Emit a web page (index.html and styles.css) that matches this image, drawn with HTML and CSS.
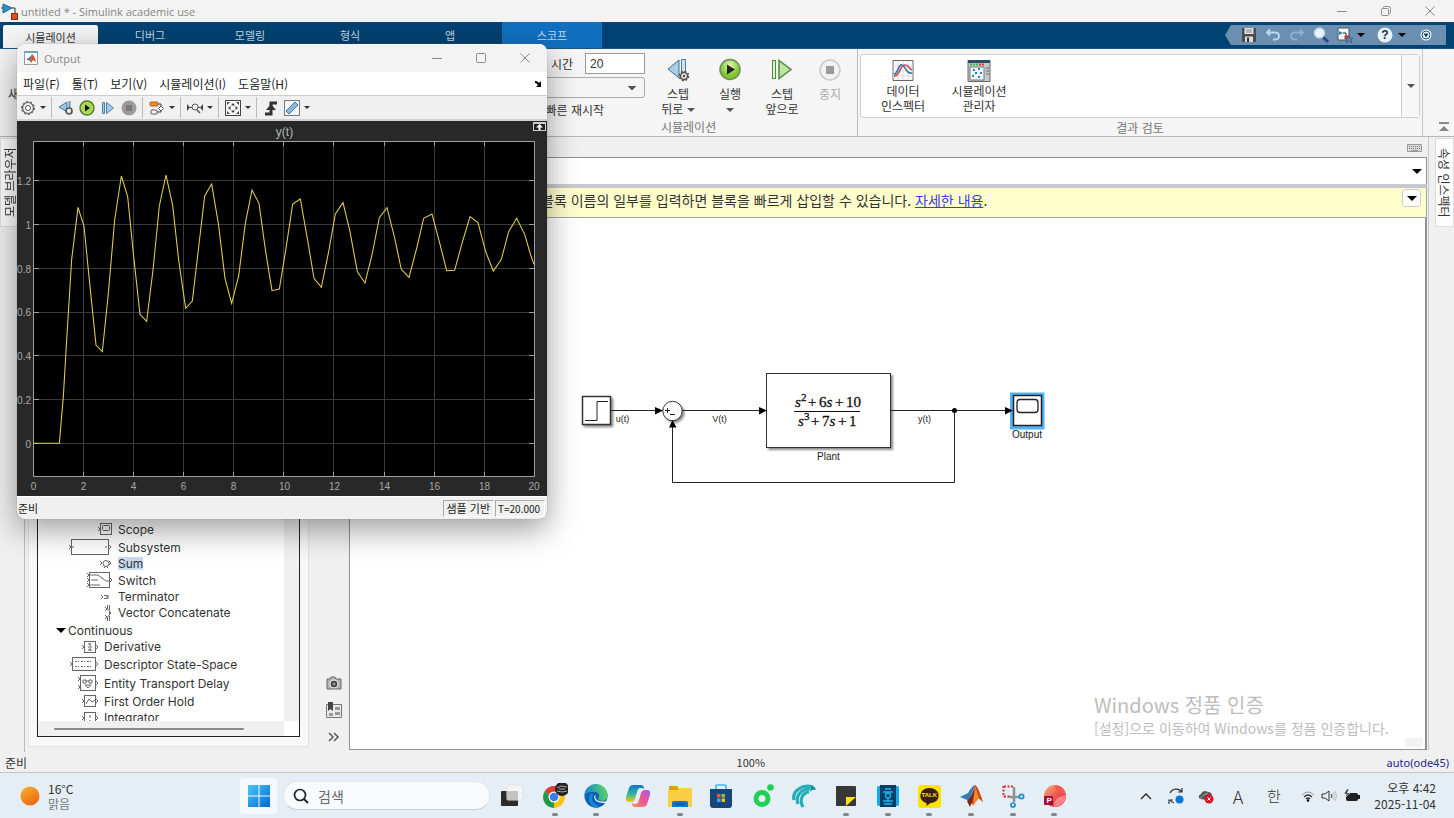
FILE: index.html
```html
<!DOCTYPE html>
<html lang="ko">
<head>
<meta charset="utf-8">
<title>untitled * - Simulink academic use</title>
<link rel="stylesheet" href="styles.css">
</head>
<body>
<div class="desktop">
<header class="titlebar">
  <svg class="app-logo" width="18" height="20" viewBox="0 0 18 20"><path d="M2 3l9 4-9 5z" fill="#2e8fc4" stroke="#1d6a99"/><path d="M0 7h2M11 7h3v5" stroke="#333" fill="none"/><rect x="10.500" y="12.500" width="6" height="6" fill="#e2501f" stroke="#8e2c0d"/></svg>
  <span class="title-text">untitled * - Simulink academic use</span>
  <div class="win-controls">
    <button aria-label="최소화"><svg width="10" height="10"><path d="M0 5.500h10"/></svg></button>
    <button aria-label="이전 크기로"><svg width="10" height="10"><rect x=".5" y="2.500" width="7" height="7" rx="1"/><path d="M2.500 2.500v-1q0-1 1-1h4q2 0 2 2v4q0 1-1 1h-1"/></svg></button>
    <button aria-label="닫기"><svg width="10" height="10"><path d="M.5.5l9 9M9.500.5l-9 9"/></svg></button>
  </div>
</header>

<nav class="tabs">
  <button class="tab active">시뮬레이션</button>
  <button class="tab">디버그</button>
  <button class="tab">모델링</button>
  <button class="tab">형식</button>
  <button class="tab">앱</button>
  <button class="tab scope-tab">스코프</button>
  <div class="quick">
    <svg class="quick-tip" width="6" height="20"><path d="M6 0L0 10l6 10z" fill="#6a8fb0"/></svg>
    <div class="quick-body">
      <button aria-label="저장"><svg width="16" height="16"><path d="M1 1h14v14H1z" fill="#4b4b4b"/><path d="M3.500 1h9v6h-9z" fill="#e4e4e4"/><path d="M5 3h6M5 5h6" stroke="#888"/><path d="M4 9.500h8V15H4z" fill="#ddd"/><path d="M6 10.500h2V15H6z" fill="#333"/></svg></button>
      <button aria-label="실행 취소"><svg width="16" height="16"><path d="M5 2.500L2 5.500l3 3M2 5.500h8q4 0 4 3.500t-4 3.500H8" fill="none" stroke="#b9dcf2" stroke-width="1.800"/></svg></button>
      <button aria-label="다시 실행"><svg width="16" height="16"><path d="M11 2.500l3 3-3 3M14 5.500H6q-4 0-4 3.500t4 3.500h2" fill="none" stroke="#8db2cd" stroke-width="1.800"/></svg></button>
      <button aria-label="찾기"><svg width="16" height="16"><path d="M10 10l5 5" stroke="#1c4f86" stroke-width="3"/><circle cx="6.500" cy="6" r="5" fill="#e6f3fb" stroke="#c6d6e2" stroke-width="1.500"/></svg></button>
      <button aria-label="즐겨찾기"><svg width="16" height="16"><path d="M1 1h11v12H1z" fill="#f6f6f6" stroke="#555"/><path d="M2 4l4 2-4 2z" fill="#297eb8"/><path d="M6 6h3v3" stroke="#333" fill="none"/><path d="M7.500 8.500h4v4h-4z" fill="#c2382a"/><path d="M12 8l1 3h3l-2 2 1 3-3-2-3 2 1-3-2-2h3z" fill="#5b82a8" stroke="#31587d" stroke-width=".7"/></svg></button>
      <i class="caret dark"></i>
      <button class="help" aria-label="도움말"><svg width="16" height="16"><circle cx="8" cy="8" r="7.500" fill="#e9f2f9"/></svg><b>?</b></button>
      <i class="caret dark"></i>
      <button class="last" aria-label="더 보기"><svg width="12" height="12"><circle cx="6" cy="6" r="5.500" fill="#fff"/><circle cx="6" cy="6" r="4" fill="#e9f2f9" stroke="#1c5681"/><path d="M3.500 4.500h5L6 8.500z" fill="#004272"/></svg></button>
    </div>
  </div>
</nav>

<section class="ribbon">
  <div class="group setup">
    <span class="new-label">새</span>
    <div class="fields">
      <div class="stop-row"><label for="stop">시간</label><input id="stop" type="text" value="20"></div>
      <select aria-label="시뮬레이션 모드"><option></option></select>
      <span class="fast">빠른 재시작</span>
    </div>
  </div>
  <div class="group sim">
    <div class="tools">
      <button class="tool"><svg width="24" height="24"><path d="M13 2v18L2 11z" fill="#a9cbe4" stroke="#41708f"/><rect x="15.500" y="1.500" width="4" height="16" fill="#cfe3f2" stroke="#4d82a8"/><circle cx="18" cy="18" r="4.500" fill="none" stroke="#555" stroke-width="1.600" stroke-dasharray="2 1.500"/><circle cx="18" cy="18" r="3.500" fill="#eee" stroke="#555" stroke-width="1.500"/><circle cx="18" cy="18" r="1.200" fill="#444"/></svg><span>스텝<br>뒤로 <i class="caret"></i></span></button>
      <button class="tool"><svg width="24" height="24"><defs><radialGradient id="green" cx=".5" cy=".3"><stop offset="0" stop-color="#e8f8b8"/><stop offset="1" stop-color="#7cc52c"/></radialGradient></defs><circle cx="12" cy="11.500" r="10" fill="url(#green)" stroke="#6f8d58" stroke-width="1.500"/><path d="M9 6.500l8 5-8 5z" fill="#222"/></svg><span>실행<br><i class="caret"></i></span></button>
      <button class="tool"><svg width="24" height="24"><rect x="2.500" y="2.500" width="3" height="18" fill="#dff2cf" stroke="#4f8b3e"/><path d="M9 2.500v18l12-9z" fill="#bfe59f" stroke="#4f8b3e" stroke-width="1.500"/></svg><span>스텝<br>앞으로</span></button>
      <button class="tool off" disabled><svg width="24" height="24"><circle cx="12" cy="12" r="10" fill="#f1f1f1" stroke="#c9c9c9" stroke-width="1.500"/><path d="M8 8h8v8H8z" fill="#999"/></svg><span>중지</span></button>
    </div>
    <div class="caption left">시뮬레이션</div>
  </div>
  <div class="group review">
    <div class="gallery">
      <button class="tool"><svg width="24" height="24"><path d="M2 1.500h20v20H2z" fill="#fafafa" stroke="#666"/><path d="M7 2v19M12 2v19M17 2v19M2 7h20M2 12h20M2 17h20" stroke="#ddd"/><path d="M3 15c4 0 4-10 8-9s4 10 10 8" stroke="#2b7cb8" stroke-width="1.700" fill="none"/><path d="M3 17c7 0 5-11 11-11 4 0 4 4 7 5" stroke="#d34b4b" stroke-width="1.700" fill="none"/></svg><span>데이터<br>인스펙터</span></button>
      <button class="tool"><svg width="24" height="24"><path d="M1 1.500h22v21H1z" fill="#c6c9cc" stroke="#666"/><path d="M1 1h22v3H1z" fill="#2d4d66"/><path d="M3 5.500h8" stroke="#24c43b" stroke-width="2" stroke-dasharray="2 1"/><path d="M12 5.500h6" stroke="#e33" stroke-width="2" stroke-dasharray="2 1"/><path d="M3 8h14v13H3z" fill="#f4f9fc" stroke="#777"/><path d="M6 11h2M11 10h2M8 14h2M13 14h2M5 17h2M11 18h2" stroke="#2183c4" stroke-width="2"/><path d="M19 9h3M19 12h3M19 15h3" stroke="#666"/></svg><span>시뮬레이션<br>관리자</span></button>
      <button class="more" aria-label="갤러리 열기"><i class="caret"></i></button>
    </div>
    <div class="caption">결과 검토</div>
  </div>
  <button class="collapse" aria-label="툴스트립 최소화"><svg width="10" height="9"><path d="M0 1h10" stroke="#888" stroke-width="2"/><path d="M0 9l5-5 5 5z" fill="#888"/></svg></button>
</section>

<main class="work">
  <aside class="rail left-rail"><button class="side-tab up">모델 브라우저</button></aside>
  <aside class="library">
    <div class="tree-box">
      <ul class="tree">
        <li class="h18"><span class="ic"><svg width="14" height="14"><rect x="2.500" y="1.500" width="11" height="11"/><rect x="4.500" y="3.500" width="7" height="5" rx="1"/><path d="M0 5l2 2-2 2"/></svg></span>Scope</li>
        <li class="h18"><span class="ic"><svg width="44" height="18"><rect x="3.500" y="1.500" width="37" height="15"/><path d="M1 7l2 2-2 2M41 7l2 2-2 2M5 8v2M38 8v2"/></svg></span>Subsystem</li>
        <li class="h14"><span class="ic"><svg width="12" height="10"><circle cx="6" cy="4.500" r="3"/><path d="M0 2l2 2-2 2M9 2l2 2-2 2M4 9l2-2 2 2"/></svg></span><mark>Sum</mark></li>
        <li class="h18"><span class="ic"><svg width="26" height="18"><rect x="3.500" y="1.500" width="20" height="15"/><path d="M1 2l2 2-2 2M1 7l2 2-2 2M1 12l2 2-2 2M24 7l2 2-2 2M4 4h8l8 6h3M4 14h10M5 9h7"/></svg></span>Switch</li>
        <li class="h14 shift"><span class="ic"><svg width="10" height="8"><path d="M1 2l2 2-2 2M4 2.500h3v3H4M8 2v4"/></svg></span>Terminator</li>
        <li class="h17"><span class="ic"><svg width="8" height="16"><path d="M1 2l2 2-2 2M1 10l2 2-2 2M3.500 0v4l2 2v4l-2 2v4M5.500 0v5M5.500 11v5M5 6l2 2-2 2"/></svg></span>Vector Concatenate</li>
        <li class="h18 branch"><i class="caret dark"></i>Continuous</li>
        <li class="h14 leaf"><span class="ic"><svg width="16" height="14"><rect x="2.500" y="1.500" width="11" height="11"/><path d="M0 5l2 2-2 2M14 5l2 2-2 2M6 4h3M8 3v3M6 7h4M6 10h4M8 8v3"/></svg></span>Derivative</li>
        <li class="h20 leaf"><span class="ic"><svg width="28" height="16"><rect x="2.500" y="1.500" width="23" height="13"/><path d="M0 6l2 2-2 2M26 6l2 2-2 2"/><path d="M5 5.500h18M5 10.500h18" stroke-dasharray="2 1 1 2"/></svg></span>Descriptor State-Space</li>
        <li class="h18 leaf"><span class="ic"><svg width="20" height="18"><rect x="2.500" y="1.500" width="15" height="15"/><path d="M0 3l2 2-2 2M0 11l2 2-2 2M18 7l2 2-2 2M5 6h3v3H5zM11 6h3v3h-3zM8 7h3M7 11l3 3 3-3z"/></svg></span>Entity Transport Delay</li>
        <li class="h18 leaf"><span class="ic"><svg width="16" height="14"><rect x="2.500" y="1.500" width="11" height="11"/><path d="M0 5l2 2-2 2M14 5l2 2-2 2M4 10l3-5 3 3 3-2"/></svg></span>First Order Hold</li>
        <li class="h14 leaf"><span class="ic"><svg width="16" height="14"><rect x="2.500" y="1.500" width="11" height="14"/><path d="M0 5l2 2-2 2M14 5l2 2-2 2M8 4v3M8 9v3"/></svg></span>Integrator</li>
      </ul>
      <div class="vbar"></div>
      <div class="hbar"><div class="thumb"></div></div>
    </div>
  </aside>
  <div class="palette">
    <button aria-label="스크린샷"><svg width="16" height="14"><path d="M1 3h3l1-2h4l1 2h5v10H1z" fill="#b5b5b5" stroke="#666"/><circle cx="8" cy="8" r="4" fill="#444" stroke="#eee"/><circle cx="8" cy="8" r="1.500" fill="#999"/></svg></button>
    <button aria-label="모델 브라우저 표시"><svg width="16" height="16"><path d="M.5 2.500h15v13H.5z" fill="#e9e9e9" stroke="#777"/><path d="M2 0h5v9L4.500 7 2 9z" fill="#444"/><path d="M9 5h5v3H9zM9 10h5v3H9zM3 11h4v3H3z" fill="#999"/></svg></button>
    <button aria-label="더 보기"><svg width="12" height="10"><path d="M1 1l4 4-4 4M6 1l4 4-4 4" fill="none" stroke="#555" stroke-width="1.500"/></svg></button>
  </div>
  <section class="editor">
    <div class="doc-tabs"><svg width="15" height="9"><path d="M.5.5h14v7H.5z" fill="#ddd" stroke="#999"/><path d="M2 2.500h11M2 4.500h11" stroke="#777" stroke-dasharray="1 1"/><path d="M4 6.500h7" stroke="#999"/></svg></div>
    <div class="address"><i class="caret dark"></i></div>
    <div class="hint"><p>블록 이름의 일부를 입력하면 블록을 빠르게 삽입할 수 있습니다. <a href="#more">자세한 내용</a>.</p><button aria-label="알림 옵션"><i class="caret dark"></i></button></div>
    <div class="canvas">
      <svg class="model" width="100%" height="100%">
        <defs><filter id="sh" x="-20%" y="-20%" width="150%" height="150%"><feDropShadow dx="2" dy="2" stdDeviation="1" flood-opacity=".45"/></filter></defs>
        <g transform="translate(-350 -218)">
          <g fill="#fff" stroke="#333">
            <rect x="582.500" y="396.500" width="28" height="28" filter="url(#sh)" stroke-width="1.500"/>
            <circle cx="672.500" cy="411" r="9.700" filter="url(#sh)"/>
            <rect x="766.500" y="373.500" width="124" height="74" filter="url(#sh)"/>
          </g>
          <path d="M585 420.500h12v-19h11" fill="none" stroke="#222"/>
          <path d="M611 410.500h45M682 410.500h78M891 410.500h115M954.500 410v72.500H672.500V427" fill="none" stroke="#222"/>
          <path d="M655 407l8 3.500-8 4zM759 407l8 3.500-8 4zM669 427.500l3.500-7.500 4 7.500z"/>
          <circle cx="954.500" cy="410.500" r="2.500"/>
          <path d="M665 410.500h5M667.500 408v5M670 414.500h5" stroke="#222"/>
          <rect x="1010" y="392.500" width="34.500" height="37" fill="#4fb3f6"/>
          <rect x="1013.500" y="395.500" width="28" height="30" fill="#fff" stroke="#222" stroke-width="1.500"/>
          <rect x="1017" y="399.500" width="21" height="13" rx="3" fill="#fff" stroke="#222" stroke-width="1.300"/>
          <path d="M1005 407l8 3.500-8 4z"/>
          <g class="sig" text-anchor="middle">
            <text x="622.500" y="422">u(t)</text><text x="719.500" y="422">V(t)</text><text x="924.500" y="422">y(t)</text>
            <text class="name" x="828.500" y="460">Plant</text><text class="name" x="1027" y="438">Output</text>
          </g>
          <g class="math">
            <text x="795" y="407"><tspan class="it">s</tspan></text><text class="sup" x="801" y="401">2</text><text x="808" y="407">+</text><text x="819" y="407">6<tspan class="it">s</tspan></text><text x="835" y="407">+</text><text x="846" y="407">10</text>
            <path d="M794 411.500h66" stroke="#111"/>
            <text x="798" y="426"><tspan class="it">s</tspan></text><text class="sup" x="804" y="420">3</text><text x="811" y="426">+</text><text x="822" y="426">7<tspan class="it">s</tspan></text><text x="838" y="426">+</text><text x="849" y="426">1</text>
          </g>
        </g>
      </svg>
      <div class="watermark"><strong>Windows 정품 인증</strong><span>[설정]으로 이동하여 Windows를 정품 인증합니다.</span></div>
      <div class="grip"></div>
    </div>
  </section>
  <aside class="rail right-rail"><button class="side-tab">속성 인스펙터</button></aside>
</main>

<footer class="status"><span>준비</span><span class="zoom">100%</span><a href="#solver">auto(ode45)</a></footer>

<footer class="taskbar">
  <div class="weather"><svg width="20" height="20"><defs><linearGradient id="sun" x1="0" y1="0" x2=".6" y2="1"><stop offset="0" stop-color="#f5b52c"/><stop offset="1" stop-color="#ee6a12"/></linearGradient></defs><circle cx="10" cy="10" r="9.500" fill="url(#sun)"/></svg><div>16°C<br><span>맑음</span></div></div>
  <button class="start" aria-label="시작"><svg width="22" height="22"><defs><linearGradient id="win" x1="0" y1="0" x2="1" y2="1"><stop offset="0" stop-color="#4cc8f6"/><stop offset="1" stop-color="#0068cf"/></linearGradient></defs><path d="M0 0h10.500v10.500H0zM11.500 0H22v10.500H11.500zM0 11.500h10.500V22H0zM11.500 11.500H22V22H11.500z" fill="url(#win)"/></svg></button>
  <label class="search"><svg width="16" height="16"><circle cx="7" cy="7" r="5.500" fill="none" stroke="#222" stroke-width="1.700"/><path d="M11 11l4 4" stroke="#222" stroke-width="2"/></svg><input type="text" placeholder="검색" aria-label="검색"></label>
  <button class="taskview" aria-label="작업 보기"><svg width="24" height="24"><rect x="1" y="7" width="17" height="15" rx="1" fill="#2b2b2b"/><rect x="7" y="1" width="16" height="15" rx="1" fill="#f4f4f4" stroke="#e2e2e2"/><path d="M7 7h11v9H7z" fill="#c4c4c4"/></svg></button>
  <div class="apps">
    <button class="run" aria-label="Chrome"><svg viewBox="0 0 26 26"><path d="M12 14L2.500 8.500A11 11 0 0 1 21.500 8.500z" fill="#e33b2e"/><path d="M12 14L21.500 8.500A11 11 0 0 1 12 25z" fill="#fbc116"/><path d="M12 14L12 25A11 11 0 0 1 2.500 8.500z" fill="#229a4a"/><circle cx="12" cy="14" r="5.500" fill="#fff"/><circle cx="12" cy="14" r="4.300" fill="#3a7de8"/><circle cx="20" cy="6" r="7" fill="#222"/><path d="M15 5l4-2 6 1M15 8l5 1 5-1M17 6h6" stroke="#aaa" fill="none"/></svg></button>
    <button class="run" aria-label="Edge"><svg viewBox="0 0 26 26"><defs><linearGradient id="edge" x1="0" y1=".5" x2="1" y2=".3"><stop offset="0" stop-color="#1685d2"/><stop offset="1" stop-color="#5bd65c"/></linearGradient></defs><circle cx="13" cy="13" r="11.500" fill="#0e5eb4"/><path d="M1.500 13a11.500 11.500 0 0 1 23-1q0 6-6 6-4 0-3-3 2-6-4-6-6-1-10 4z" fill="url(#edge)"/><path d="M13 11c-3 6 4 9 11 7l1-1-1 3c-3 0-12 1-13-6z" fill="#e9f1f8"/><path d="M9 11q-5 9 6 13" fill="none" stroke="#1788d8" stroke-width="3"/></svg></button>
    <button aria-label="Copilot"><svg viewBox="0 0 26 26"><defs><linearGradient id="c1" x1="0" y1="0" x2="0" y2="1"><stop offset="0" stop-color="#1673d2"/><stop offset=".5" stop-color="#2ab3a0"/><stop offset="1" stop-color="#f3c613"/></linearGradient><linearGradient id="c2" x1="1" y1="0" x2="0" y2="1"><stop offset="0" stop-color="#a35bf0"/><stop offset=".5" stop-color="#f0568e"/><stop offset="1" stop-color="#ff9a52"/></linearGradient></defs><path d="M8 2h8q3 0 3 4l-2-1h-2q-2 0-3 4l-2 7q-1 3-4 3H4q-4 0-3-5l3-9q1-3 4-3z" fill="url(#c1)"/><path d="M18 24h-8q-3 0-3-4l2 1h1q3 0 4-4l2-7q1-3 4-3h2q4 0 3 5l-3 9q-1 3-4 3z" fill="url(#c2)"/></svg></button>
    <button class="run" aria-label="파일 탐색기"><svg viewBox="0 0 26 26"><path d="M2 3h8l2 3h12v8H2z" fill="#dc9d17"/><path d="M2 7h9l2-2h11q1 0 1 1v18H1V8q0-1 1-1z" fill="#fbce48"/><path d="M5 24v-4q0-2 2-2h12q2 0 2 2v4z" fill="#1574c8"/><path d="M9 21h8" stroke="#074d92"/></svg></button>
    <button aria-label="Store"><svg viewBox="0 0 26 26"><path d="M8 7V3q0-1 1-1h8q1 0 1 1v4" fill="none" stroke="#3dbdf0" stroke-width="1.700"/><path d="M2 6h22v16q0 3-3 3H5q-3 0-3-3z" fill="#16477c"/><path d="M9 11h3.500v3.500H9z" fill="#f05a2b"/><path d="M13.500 11H17v3.500h-3.500z" fill="#8cc63e"/><path d="M9 15.500h3.500V19H9z" fill="#2ea6ea"/><path d="M13.500 15.500H17V19h-3.500z" fill="#fbbd17"/></svg></button>
    <button aria-label="음악"><svg viewBox="0 0 26 26"><circle cx="12" cy="15.500" r="6" fill="none" stroke="#1fd055" stroke-width="5"/><circle cx="20.500" cy="4.500" r="3.300" fill="#1fd055"/></svg></button>
    <button aria-label="웨일"><svg viewBox="0 0 26 26"><g fill="none" stroke="#20afb8" stroke-width="3.200"><path d="M3 17C1 8 11 1 22 4"/><path d="M7 21C4 13 10 6 19 6"/><path d="M12 24c-4-7-1-14 6-15"/></g><path d="M20 3q4 0 5 4-4-1-6 2" fill="#168d9e"/></svg></button>
    <button class="run" aria-label="스티커 메모"><svg viewBox="0 0 26 26"><rect x="3" y="3" width="20" height="20" rx="1" fill="#373737"/><path d="M13 23V14h10z" fill="#ffe01b"/></svg></button>
    <button class="run" aria-label="한글"><svg viewBox="0 0 26 26"><rect x="2" y="3" width="22" height="20" rx="2" fill="#10a9ee"/><rect x="5" y="2" width="16" height="22" fill="#053f65"/><path d="M10 6h6M8 9h10M13 15v3M8 18h10M9 21h8" stroke="#22b8f2" stroke-width="1.300"/><circle cx="13" cy="12.500" r="2.500" fill="none" stroke="#22b8f2" stroke-width="1.300"/></svg></button>
    <button class="run talk" aria-label="카카오톡"><svg viewBox="0 0 26 26"><rect x="2" y="2" width="23" height="23" rx="3" fill="#fbe300"/><path d="M13.500 5c12 0 12 15 1 15l-4 3v-3c-9-2-8-15 3-15z" fill="#3b1c1a"/></svg><b>TALK</b></button>
    <button class="run" aria-label="MATLAB"><svg viewBox="0 0 26 26"><path d="M2 14l8-4q5-8 7-8l-6 16-4-2z" fill="#347bb3"/><path d="M17 2q3 1 8 17l-5-4-5 7-4-4q4-5 6-16z" fill="#cb4b1c"/><path d="M17 2q-1 14-5 22l-3-6q5-4 8-16z" fill="#7e241c"/><path d="M17 3l4 12-6 8z" fill="#f38a29"/></svg></button>
    <button class="run" aria-label="캡처 도구"><svg viewBox="0 0 26 26"><path d="M4 3.500h10M4 13.500h7M3.500 3v11" fill="none" stroke="#d12e2b" stroke-width="2" stroke-dasharray="2 1.500"/><path d="M14 4v15M9 14h11" stroke="#8a9299" stroke-width="2.500"/><circle cx="21.500" cy="13.500" r="2.200" fill="none" stroke="#208dd6" stroke-width="1.700"/><circle cx="13" cy="22" r="2" fill="none" stroke="#208dd6" stroke-width="1.700"/></svg></button>
    <button class="run ppt" aria-label="PowerPoint"><svg viewBox="0 0 26 26"><defs><linearGradient id="pp" x1="0" y1="0" x2="1" y2="1"><stop offset="0" stop-color="#ffad7a"/><stop offset=".6" stop-color="#e84a4a"/><stop offset="1" stop-color="#c41e4b"/></linearGradient></defs><circle cx="14" cy="13" r="11" fill="url(#pp)"/><path d="M14 2q1 8 11 10-3-10-11-10z" fill="#f4594c"/><path d="M13 24q-1-10 12-12-1 11-12 12z" fill="#ff8585"/><rect x="3" y="13" width="9" height="9" rx="1" fill="#a90d32"/></svg><b>P</b></button>
  </div>
  <div class="tray">
    <button class="t1" aria-label="숨겨진 아이콘"><svg width="12" height="8"><path d="M1 7l5-5 5 5" fill="none" stroke="#222" stroke-width="1.300"/></svg></button>
    <button class="t1" aria-label="동기화"><svg width="18" height="18"><path d="M3 6a7 7 0 0 1 12-1M15 1v4h-4M2 17v-4h4M3 13a7 7 0 0 0 4 3" fill="none" stroke="#333" stroke-width="1.200"/><circle cx="12.500" cy="12.500" r="4" fill="#0a76d8"/></svg></button>
    <button class="t1" aria-label="OneDrive"><svg width="18" height="16"><path d="M3 11q-3-3 1-5 2-5 7-2 4 0 4 4l-4 4z" fill="#555"/><path d="M3 11q3-5 8-6" stroke="#aaa" fill="none"/><circle cx="12" cy="11" r="4.500" fill="#d3182b"/><path d="M10.500 9.500l3 3M13.500 9.500l-3 3" stroke="#fff"/></svg></button>
    <button class="lang">A</button>
    <button class="lang han">한</button>
    <button class="net" aria-label="네트워크 및 전원"><svg width="14" height="12"><g fill="none" stroke="#333"><path d="M1 5q6-6 12 0" stroke="#999"/><path d="M3 7q4-4 8 0M5 9q2-2 4 0" stroke-width="1.200"/></g><circle cx="7" cy="10.500" r="1.200"/></svg><svg width="16" height="14"><path d="M1 5h3l4-3v10L4 9H1z" fill="none" stroke="#333"/><path d="M10 5q2 2 0 4" fill="none" stroke="#333"/><path d="M12 3q3 4 0 8M14 2q3 5 0 10" fill="none" stroke="#bbb"/></svg><svg width="18" height="14"><rect x="3.500" y="4.500" width="11" height="7" rx="1" fill="#222" stroke="#222"/><path d="M16 6v4" stroke="#222" stroke-width="2"/><path d="M4 0L1 5h3L2 9l5-5H4l2-4z" fill="#222" stroke="#e6eef5" stroke-width=".6"/></svg></button>
    <div class="clock">오후 4:42<br>2025-11-04</div>
  </div>
</footer>

<section class="scope">
  <header class="scope-title">
    <svg width="14" height="14"><path d="M.5.5h13v13H.5z" fill="#fff" stroke="#999"/><path d="M0 0h14v2H0z" fill="#6fa2c7"/><path d="M2 8l3-1 3-4-2 7z" fill="#2c77ad"/><path d="M8 3q2 1 4 8l-3-2-2 3-1-2z" fill="#d4501c"/></svg>
    <span>Output</span>
    <div class="win-controls">
      <button aria-label="최소화"><svg width="10" height="10"><path d="M0 5.500h10"/></svg></button>
      <button aria-label="최대화"><svg width="10" height="10"><rect x=".5" y=".5" width="9" height="9" rx="1"/></svg></button>
      <button aria-label="닫기"><svg width="10" height="10"><path d="M.5.5l9 9M9.500.5l-9 9"/></svg></button>
    </div>
  </header>
  <nav class="menu"><button>파일(F)</button><button>툴(T)</button><button>보기(V)</button><button>시뮬레이션(I)</button><button>도움말(H)</button><svg width="8" height="8"><path d="M0 1q3 0 4 2l2-2v6H1l2-2Q2 3 0 3z"/></svg></nav>
  <div class="bar">
    <button aria-label="설정"><svg width="16" height="16"><circle cx="8" cy="8" r="5.500" fill="#eee" stroke="#555" stroke-width="1.200"/><circle cx="8" cy="8" r="6.500" fill="none" stroke="#555" stroke-dasharray="2 2"/><circle cx="8" cy="8" r="2.500" fill="#fff" stroke="#555"/></svg></button><i class="caret small"></i><hr>
    <button aria-label="스텝 뒤로"><svg width="16" height="16"><path d="M9 2v10L1 7z" fill="#9fc4df" stroke="#4c7a9b"/><path d="M11.500 1v7" stroke="#6799bd" stroke-width="2"/><circle cx="11" cy="11" r="3" fill="#eee" stroke="#555" stroke-width="1.700"/></svg></button>
    <button aria-label="실행"><svg width="16" height="16"><circle cx="8" cy="8" r="7" fill="#a9d957" stroke="#567a2c" stroke-width="1.400"/><path d="M6 4.500l5 3.500-5 3.500z" fill="#111"/></svg></button>
    <button aria-label="스텝 앞으로"><svg width="16" height="16"><path d="M2.500 2.500h2v11h-2zM6.500 2.500v11l7-5.500z" fill="#a5cbe8" stroke="#4d82a8"/></svg></button>
    <button aria-label="중지"><svg width="16" height="16"><circle cx="8" cy="8" r="7.500" fill="#9b9b9b"/><path d="M5 5h6v6H5z" fill="#777"/></svg></button><hr>
    <button aria-label="블록 강조"><svg width="16" height="16"><rect x="1" y="2" width="8" height="4" rx="1" fill="#f08b2c" stroke="#b45e12"/><path d="M9 4h3v4" fill="none" stroke="#444"/><path d="M12 6l2.500 2.500L12 11 9.500 8.500z" fill="#fff" stroke="#555"/><rect x="2" y="10" width="6" height="4" rx="1" fill="#fff" stroke="#555"/><path d="M8 12h4v-1" fill="none" stroke="#444"/></svg></button><i class="caret small"></i><hr>
    <button aria-label="확대"><svg width="16" height="16"><path d="M0 4v7l3-3.500zM16 4v7l-3-3.500z" fill="#444"/><path d="M3 7.500h2M11 7.500h2" stroke="#444"/><circle cx="8" cy="7" r="3" fill="#fff" stroke="#555"/><path d="M10 10l3 3" stroke="#555" stroke-width="1.500"/></svg></button><i class="caret small"></i><hr>
    <button aria-label="축 맞춤"><svg width="16" height="16"><rect x=".5" y=".5" width="15" height="15" fill="#f5f5f5" stroke="#444"/><path d="M2 2h3L2 5zM14 2h-3l3 3zM2 14h3l-3-3zM14 14h-3l3-3zM8 3l2 2.500H6zM8 13l2-2.500H6zM3 8l2.500-2v4zM13 8l-2.500-2v4z" fill="#444"/></svg></button><i class="caret small"></i><hr>
    <button aria-label="트리거"><svg width="14" height="16"><path d="M1 14h6V3h6" fill="none" stroke="#333" stroke-width="3"/><path d="M2 10l5-6 5 6z" fill="#333"/></svg></button>
    <button aria-label="측정"><svg width="16" height="16"><rect x=".5" y=".5" width="15" height="15" fill="#fafafa" stroke="#777"/><path d="M2 11l9-9 3 3-9 9z" fill="#8cb9dc" stroke="#447296"/></svg></button><i class="caret small"></i>
  </div>
  <div class="plot">
    <svg viewBox="17 121 530 375" width="100%">
      <rect x="33.500" y="141.500" width="501" height="335" fill="#000"/>
      <path d="M83.500 142v334M133.500 142v334M183.500 142v334M233.500 142v334M283.500 142v334M333.500 142v334M384.500 142v334M434.500 142v334M484.500 142v334M34 180.500h500M34 224.500h500M34 268.500h500M34 312.500h500M34 355.500h500M34 399.500h500M34 443.500h500" stroke="#3a3a3a" fill="none"/>
      <path d="M83.500 142v4M133.500 142v4M183.500 142v4M233.500 142v4M283.500 142v4M333.500 142v4M384.500 142v4M434.500 142v4M484.500 142v4M83.500 472v4M133.500 472v4M183.500 472v4M233.500 472v4M283.500 472v4M333.500 472v4M384.500 472v4M434.500 472v4M484.500 472v4M34 180.500h5M34 224.500h5M34 268.500h5M34 312.500h5M34 355.500h5M34 399.500h5M34 443.500h5M529 180.500h5M529 224.500h5M529 268.500h5M529 312.500h5M529 355.500h5M529 399.500h5M529 443.500h5" stroke="#a0a0a0" fill="none"/>
      <rect x="33.500" y="141.500" width="501" height="335" fill="none" stroke="#a0a0a0"/>
      <g transform="translate(0 120) scale(.33333)"><polyline fill="none" stroke="#e0cd50" stroke-width="3.200" points="101,970 178,970 190,830 200,660 215,418 234,262 252,318 267,470 288,675 307,695 325,520 344,300 364,168 383,230 401,410 420,583 440,604 459,450 478,258 498,165 518,256 536,420 557,565 577,543 595,390 614,228 635,192 655,310 675,475 695,550 716,468 736,310 756,210 777,250 797,395 816,512 838,507 858,385 878,252 901,237 921,350 942,475 964,502 986,395 1006,282 1029,248 1050,335 1072,455 1095,489 1116,405 1138,293 1161,263 1183,350 1204,448 1227,472 1250,385 1271,295 1296,282 1318,365 1340,452 1364,451 1386,370 1410,290 1434,308 1457,395 1480,453 1504,418 1526,335 1550,295 1574,343 1592,405 1602,433"/></g>
      <g class="tick" text-anchor="end"><text x="31" y="185">1.2</text><text x="31" y="229">1</text><text x="31" y="273">0.8</text><text x="31" y="316">0.6</text><text x="31" y="360">0.4</text><text x="31" y="404">0.2</text><text x="31" y="448">0</text></g>
      <g class="tick" text-anchor="middle"><text x="33.500" y="490">0</text><text x="83.500" y="490">2</text><text x="133.500" y="490">4</text><text x="183.500" y="490">6</text><text x="233.500" y="490">8</text><text x="284.500" y="490">10</text><text x="334.500" y="490">12</text><text x="384.500" y="490">14</text><text x="434.500" y="490">16</text><text x="484.500" y="490">18</text><text x="534" y="490">20</text></g>
      <text class="plot-title" x="284.500" y="136" text-anchor="middle">y(t)</text>
      <rect x="533.500" y="122.500" width="12" height="8" fill="#222" stroke="#ccc"/><path d="M533 123h13" stroke="#ccc" stroke-width="2"/><path d="M539.500 124l3.500 3.500h-7zM538.500 127h2v3h-2z" fill="#fff"/>
    </svg>
  </div>
  <footer class="scope-status"><span>준비</span><output>샘플 기반</output><output>T=20.000</output></footer>
</section>
</div>
</body>
</html>
```
FILE: styles.css
```css
* { box-sizing: border-box; }
body { margin: 0; font-family: "Noto Sans CJK KR", "Liberation Sans", sans-serif; font-size: 12px; color: #333; }
button { border: 0; background: none; padding: 0; margin: 0; font: inherit; color: inherit; display: flex; align-items: center; justify-content: center; }
svg { display: block; flex: none; }
.caret { display: inline-block; width: 0; height: 0; border: 4px solid transparent; border-top: 4px solid #555; border-bottom: 0; flex: none; }
.caret.dark { border-width: 5px 5px 0; border-top-color: #000; }
.caret.small { border-width: 3px 3px 0; margin: 0 2px; border-top-color: #333; }

.desktop { position: relative; display: flex; flex-direction: column; height: 100vh; min-height: 680px; overflow: hidden; background: #f0f0f0; }
.titlebar { flex: none; height: 22px; display: flex; align-items: center; gap: 2px; background: #f3f3f3; color: #858585; }
.title-text, .scope-title span { font-family: "Open Sans", sans-serif; font-size: 11px; }
.app-logo { margin-left: 1px; }
.win-controls { margin-left: auto; display: flex; }
.win-controls button { width: 44px; height: 22px; }
.win-controls svg { fill: none; stroke: #8a8a8a; }
.titlebar .win-controls { padding-right: 2px; }

.tabs { flex: none; height: 27px; display: flex; background: #004272; border-bottom: 1px solid #1c5681; }
.tab { width: 100px; color: #c5d7e5; font-size: 11px; }
.tab.active { width: 95px; margin: 3px 2px 0 3px; background: #f5f5f5; color: #333; border-radius: 2px 2px 0 0; }
.tab.scope-tab { background: #1070c0; margin-left: 2px; }
.quick { margin: 3px 8px 3px auto; display: flex; }
.quick-body { display: flex; align-items: center; background: #6a8fb0; padding: 0 6px; width: 215px; }
.quick-body button { width: 24px; height: 20px; }
.quick-body .help { position: relative; width: 26px; margin-left: 7px; }
.quick-body .help b { position: absolute; font: bold 12px "Liberation Sans", sans-serif; color: #222b40; }
.quick-body .caret { border-width: 4px 4px 0; }
.quick-body .last { margin-left: 8px; }

.ribbon { flex: none; height: 88px; display: flex; background: #f5f5f5; border-bottom: 1px solid #b5b5b5; }
.setup { width: 645px; display: flex; justify-content: space-between; padding: 4px 0 0 8px; }
.new-label { padding-top: 32px; }
.fields { display: flex; flex-direction: column; align-items: flex-end; gap: 3px; }
.stop-row { display: flex; align-items: center; gap: 12px; }
.stop-row input { width: 60px; height: 21px; border: 1px solid #999; padding: 0 4px; font: 12px "Liberation Sans", sans-serif; color: #333; background: #fff; }
.fields select { appearance: none; width: 140px; height: 21px; border: 1px solid #aaa; border-radius: 3px; background: linear-gradient(45deg, transparent 50%, #555 50%) no-repeat right 12px center / 4px 4px, linear-gradient(-45deg, transparent 50%, #555 50%) no-repeat right 8px center / 4px 4px, #f5f5f5; }
.fast { margin-right: 41px; line-height: 18px; }
.sim { width: 213px; border-right: 1px solid #bbb; padding: 9px 0 0 7px; display: flex; flex-direction: column; }
.tools { display: flex; height: 60px; }
.tool { width: 52px; flex-direction: column; justify-content: flex-start; line-height: 15px; gap: 4px; }
.tool .caret { margin: 0 0 2px 4px; }
.tool br + .caret { margin-left: 0; }
.tool.off { width: 44px; color: #aaa; }
.caption { color: #777; text-align: center; line-height: 18px; }
.caption.left { text-align: left; padding-left: 9px; }
.review { flex: 1; padding: 5px 2px 0 2px; border-right: 1px solid #c5c5c5; }
.gallery { height: 64px; display: flex; background: #fff; border: 1px solid #cfcfcf; border-radius: 3px; padding: 4px 0 0 4px; margin-bottom: 1px; }
.gallery .tool { width: 76px; gap: 0; }
.more { margin: -4px 0 0 auto; width: 18px; border-left: 1px solid #ccc; background: #f7f7f7; }
.collapse { width: 31px; align-self: flex-end; height: 19px; padding-left: 11px; }

.work { flex: 1; min-height: 0; display: flex; }
.rail { display: flex; align-items: flex-start; }
.left-rail { width: 25px; border-right: 1px solid #bbb; padding: 1px 0; }
.right-rail { width: 25px; padding: 1px 0 0 6px; }
.side-tab { writing-mode: vertical-rl; text-orientation: sideways; width: 19px; height: 89px; background: #fdfdfd; border: 1px solid #ddd; line-height: 17px; }
.side-tab.up { transform: rotate(180deg); }
.library { width: 281px; margin: 0 0 5px 3px; padding: 0 8px 9px; background: #f8f8f8; border: 1px solid #e2e2e2; }
.tree-box { height: 100%; border: 1px solid #222; background: #fff; display: grid; grid-template: 1fr 15px / 1fr 15px; }
.tree { margin: 0 0 -4px; padding: 0; list-style: none; overflow: hidden; display: flex; flex-direction: column; justify-content: flex-end; font: 12px Inter, "Liberation Sans", sans-serif; color: #333; }
.tree li { flex: none; display: flex; align-items: center; padding-left: 80px; }
.tree .ic { width: 0; display: flex; justify-content: flex-end; }
.tree .ic svg { margin-right: 6px; fill: none; stroke: #666; }
.tree .leaf { padding-left: 66px; }
.tree .shift .ic svg { margin-right: 8px; }
.tree .branch { padding-left: 18px; gap: 2px; }
.tree mark { background: #c6dbf0; color: inherit; line-height: 13px; }
.h14 { height: 15px; } .h17 { height: 17px; } .h18 { height: 18px; } .h20 { height: 20px; }
.vbar { background: #f0f0f0; }
.hbar { position: relative; background: #f0f0f0; padding: 7px 40px 0 16px; }
.thumb { height: 2px; background: #888; border-radius: 1px; }
.palette { width: 40px; display: flex; flex-direction: column; align-items: center; justify-content: flex-end; gap: 12px; padding: 0 0 8px 10px; }
.palette button { height: 15px; }

.editor { flex: 1; min-width: 0; display: flex; flex-direction: column; margin-bottom: 2px; border-right: 1px solid #c8c8c8; padding-right: 1px; }
.doc-tabs { height: 20px; display: flex; align-items: center; justify-content: flex-end; padding: 2px 5px 0 0; flex: none; }
.address { flex: none; height: 28px; background: #fff; border: 1px solid #8f919b; border-bottom-color: #ccc; display: flex; align-items: center; justify-content: flex-end; padding-right: 4px; }
.hint { flex: none; height: 33px; background: #ffffcc; border: 1px solid #a3a5ad; border-top: 3px solid #c6c7d0; display: flex; align-items: flex-start; justify-content: space-between; padding: 1px 5px 0 191px; }
.hint p { margin: 0; font-size: 14px; line-height: 22px; color: #333; }
.hint a { color: #3c3ce0; }
.hint button { width: 19px; height: 18px; background: #fff; border: 1px solid #ccc; border-radius: 3px; }
.canvas { position: relative; flex: 1; min-height: 0; background: #fff; border: 1px solid #8f919b; border-top: 0; border-right-width: 2px; }
.model { position: absolute; inset: 0; }
.sig text { font: 9px "Liberation Sans", sans-serif; fill: #222; }
.sig .name { font-size: 10px; }
.math text { font: 15px "Liberation Serif", serif; fill: #111; stroke: #111; stroke-width: .3px; }
.math .sup { font-size: 11px; }
.math .it { font-style: italic; }
.watermark { position: absolute; right: 28px; bottom: 10px; width: 303px; color: #bdbdbd; display: flex; flex-direction: column; }
.watermark strong { font-weight: 400; font-size: 20px; line-height: 24px; }
.watermark span { font-size: 14px; line-height: 22px; white-space: nowrap; }
.grip { position: absolute; right: 2px; bottom: 2px; width: 18px; height: 9px; background: #f2f2f2; }

.status { flex: none; height: 21px; display: flex; justify-content: space-between; align-items: center; padding: 0 5px; border-bottom: 1px solid #c5c5c5; }
.status .zoom { padding-left: 88px; font-size: 11px; }
.status a { color: #27278c; text-decoration: none; font: 11px "Noto Sans", sans-serif; }

.taskbar { flex: none; height: 45px; display: flex; align-items: center; background: #e6eef5; }
.weather { width: 240px; display: flex; align-items: center; gap: 8px; padding-left: 20px; font-size: 12px; line-height: 15px; }
.weather span { color: #777; }
.start { width: 37px; height: 36px; border-radius: 4px; background: #f5f9fc; }
.search { margin-left: 6px; width: 207px; height: 29px; border-radius: 15px; background: #f7fbfd; border: 1px solid #e0e6ea; border-bottom-color: #c8d0d5; display: flex; align-items: center; gap: 9px; padding: 0 9px; }
.search input { width: 100%; border: 0; background: none; outline: 0; font: 14px "Noto Sans CJK KR", sans-serif; padding: 0; }
.search input::placeholder { color: #666; opacity: 1; }
.taskview { width: 44px; height: 45px; }
.apps { width: 541px; height: 45px; display: grid; grid-template-columns: repeat(13, 1fr); }
.apps button { position: relative; }
.apps svg { width: 26px; height: 26px; }
.apps b { position: absolute; font: bold 6px "Liberation Sans", sans-serif; color: #fbe300; margin-top: -2px; }
.apps .ppt b { color: #fff; font-size: 8px; left: 13px; margin-top: 9px; }
.run::after { content: ""; position: absolute; bottom: 2px; width: 6px; height: 3px; border-radius: 2px; background: #858585; }
.tray { margin-left: auto; display: flex; align-items: center; padding-right: 18px; }
.tray .t1 { width: 30px; }
.tray .lang { width: 34px; font-size: 18px; font-weight: 300; color: #333; }
.tray .han { width: 38px; font-size: 15px; }
.net { gap: 6px; padding-left: 8px; }
.clock { width: 75px; text-align: right; font-size: 12px; line-height: 16px; color: #333; white-space: nowrap; }

.scope { position: absolute; left: 17px; top: 44px; width: 530px; border-radius: 8px; overflow: hidden; background: #f0f0f0; box-shadow: 0 0 1px #777, 0 10px 32px rgba(0, 0, 0, .4); }
.scope-title { height: 28px; display: flex; align-items: center; gap: 6px; padding-left: 7px; background: #f3f3f3; color: #8a8a8a; }
.menu { height: 24px; display: flex; align-items: center; gap: 12px; padding: 0 4px 0 6px; background: #fff; color: #222; border-bottom: 1px solid #ccc; }
.menu svg { margin-left: auto; }
.bar { height: 25px; display: flex; align-items: center; background: #f0f0f0; border-bottom: 2px solid #d0d0d0; }
.bar button { width: 21px; height: 22px; }
.bar hr { width: 1px; height: 21px; margin: 0 3px; border: 0; background: #bbb; }
.plot { background: #282828; }
.tick text { font: 10px "Liberation Sans", sans-serif; fill: #a8a8a8; }
.plot-title { font: 12px "Liberation Sans", sans-serif; fill: #b5b5b5; }
.scope-status { height: 23px; display: flex; align-items: center; gap: 1px; padding-right: 2px; color: #222; font-size: 11px; border-top: 1px solid #fff; }
.scope-status span { margin-right: auto; padding-left: 1px; }
.scope-status output { height: 17px; line-height: 15px; padding: 0 3px 0 2px; border: 1px solid #fff; border-top-color: #aaa; border-left-color: #aaa; }
.scope-status output:last-child { width: 50px; font-size: 10px; }
```
